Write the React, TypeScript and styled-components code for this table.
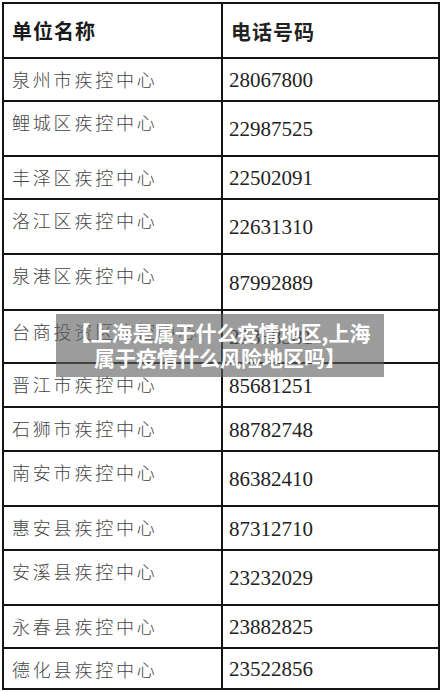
import React from "react";
import styled, { createGlobalStyle } from "styled-components";

const Global = createGlobalStyle`
  html, body { margin: 0; padding: 0; background: #ffffff; }
  body { width: 442px; height: 692px; overflow: hidden; }
`;

const Page = styled.div`
  position: relative;
  width: 442px;
  height: 692px;
  padding-top: 2px;
  padding-left: 2px;
  box-sizing: border-box;
`;

const Table = styled.div`
  width: 438px;
  border-top: 2px solid #141414;
  border-left: 2px solid #141414;
  border-right: 2px solid #141414;
  box-sizing: border-box;
`;

const Row = styled.div<{ $h: number }>`
  display: grid;
  grid-template-columns: 219px 1fr;
  height: ${(p) => p.$h}px;
  border-bottom: 2px solid #141414;
  box-sizing: border-box;
`;

const NameCell = styled.div<{ $head?: boolean }>`
  border-right: 2px solid #141414;
  padding-left: 8px;
  padding-top: ${(p) => (p.$head ? "0" : "8px")};
  display: flex;
  align-items: ${(p) => (p.$head ? "center" : "flex-start")};
  font-family: "Noto Sans CJK SC", sans-serif;
  font-size: ${(p) => (p.$head ? "20px" : "18px")};
  font-weight: ${(p) => (p.$head ? 700 : 300)};
  letter-spacing: ${(p) => (p.$head ? "1px" : "2.8px")};
  line-height: 24px;
  color: ${(p) => (p.$head ? "#1a1a1a" : "#444444")};
  white-space: nowrap;
  overflow: hidden;
  box-sizing: border-box;
`;

const PhoneCell = styled.div<{ $head?: boolean }>`
  padding-left: ${(p) => (p.$head ? "8px" : "6px")};
  padding-top: 2px;
  display: flex;
  align-items: center;
  font-family: ${(p) =>
    p.$head ? `"Noto Sans CJK SC", sans-serif` : `"Liberation Serif", serif`};
  font-size: ${(p) => (p.$head ? "20px" : "21px")};
  font-weight: ${(p) => (p.$head ? 700 : 400)};
  letter-spacing: ${(p) => (p.$head ? "1px" : "0")};
  color: #222222;
  box-sizing: border-box;
`;

const Overlay = styled.div`
  position: absolute;
  left: 56px;
  top: 314px;
  width: 328px;
  height: 63px;
  padding-top: 6px;
  box-sizing: border-box;
  background: rgba(95, 95, 95, 0.62);
  color: #ffffff;
  font-family: "Noto Sans CJK SC", sans-serif;
  font-weight: 700;
  font-size: 21px;
  line-height: 25px;
  text-align: center;
  white-space: nowrap;
`;

const OverlayLine = styled.div``;

const rows: { name: string; phone: string; h: number }[] = [
  { name: "泉州市疾控中心", phone: "28067800", h: 43 },
  { name: "鲤城区疾控中心", phone: "22987525", h: 55 },
  { name: "丰泽区疾控中心", phone: "22502091", h: 43 },
  { name: "洛江区疾控中心", phone: "22631310", h: 55 },
  { name: "泉港区疾控中心", phone: "87992889", h: 56 },
  { name: "台商投资区疾控中心", phone: "27358581", h: 53 },
  { name: "晋江市疾控中心", phone: "85681251", h: 44 },
  { name: "石狮市疾控中心", phone: "88782748", h: 44 },
  { name: "南安市疾控中心", phone: "86382410", h: 55 },
  { name: "惠安县疾控中心", phone: "87312710", h: 44 },
  { name: "安溪县疾控中心", phone: "23232029", h: 55 },
  { name: "永春县疾控中心", phone: "23882825", h: 43 },
  { name: "德化县疾控中心", phone: "23522856", h: 41 },
];

export default function App() {
  return (
    <>
      <Global />
      <Page>
        <Table>
          <Row $h={55}>
            <NameCell $head>单位名称</NameCell>
            <PhoneCell $head>电话号码</PhoneCell>
          </Row>
          {rows.map((r) => (
            <Row key={r.name} $h={r.h}>
              <NameCell>{r.name}</NameCell>
              <PhoneCell>{r.phone}</PhoneCell>
            </Row>
          ))}
        </Table>
        <Overlay>
          <OverlayLine>【上海是属于什么疫情地区,上海</OverlayLine>
          <OverlayLine>属于疫情什么风险地区吗】</OverlayLine>
        </Overlay>
      </Page>
    </>
  );
}
